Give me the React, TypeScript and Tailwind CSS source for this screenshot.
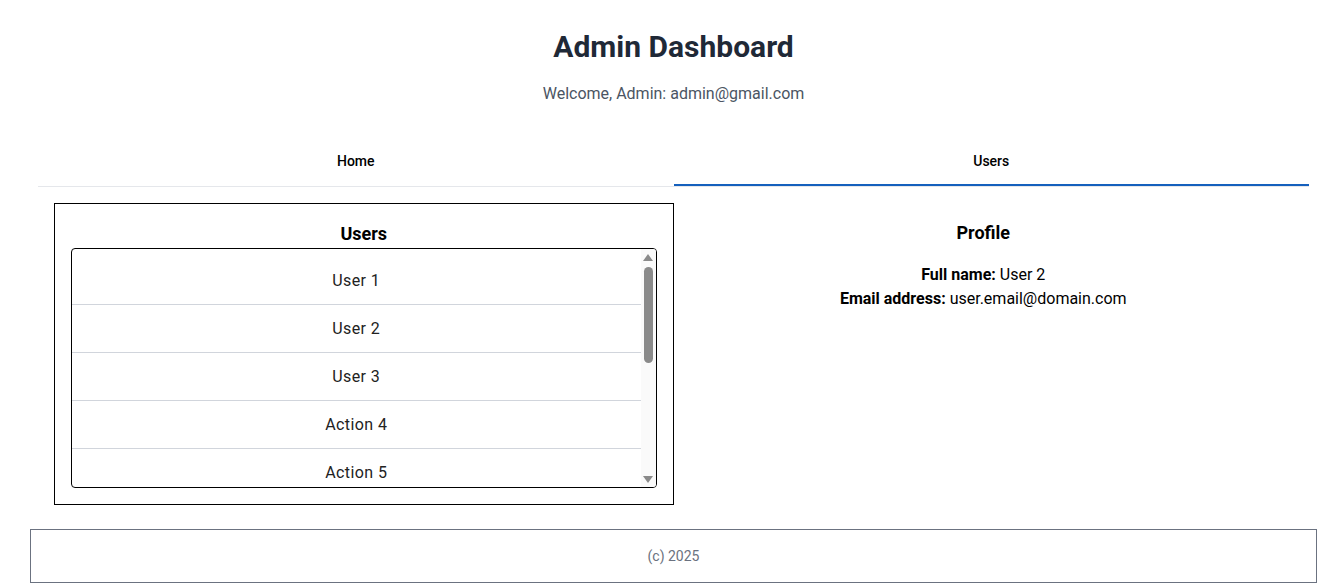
import { useState } from 'react'

const users = [
  { id: 1, name: 'User 1' },
  { id: 2, name: 'User 2' },
  { id: 3, name: 'User 3' },
  { id: 4, name: 'Action 4' },
  { id: 5, name: 'Action 5' },
  { id: 6, name: 'Action 6' },
  { id: 7, name: 'Action 7' },
  { id: 8, name: 'Action 8' },
  { id: 9, name: 'Action 9' },
  { id: 10, name: 'Action 10' },
]

function Tabs({ tab, setTab }: { tab: string; setTab: (t: string) => void }) {
  return (
    <div className="flex border-b border-gray-200">
      {['Home', 'Users'].map(t => (
        <button
          key={t}
          onClick={() => setTab(t)}
          className={`relative flex-1 h-12 pb-0.5 text-sm font-medium text-black ${tab === t ? 'after:absolute after:left-0 after:right-0 after:bottom-0 after:h-[2px] after:bg-[#1560bd]' : ''}`}
        >
          {t}
        </button>
      ))}
    </div>
  )
}

// list with a classic-looking scrollbar drawn beside it
function UserList({ onSelect }: { onSelect: (id: number) => void }) {
  const [ratio, setRatio] = useState(0)
  const thumbTop = 2 + ratio * (206 - 2 - 96)

  return (
    <div className="flex h-[240px] overflow-hidden rounded-[4px] border border-black">
      <ul
        className="flex-1 overflow-y-auto py-2 [scrollbar-width:none]"
        onScroll={e => {
          const el = e.currentTarget
          setRatio(el.scrollTop / (el.scrollHeight - el.clientHeight))
        }}
      >
        {users.map(u => (
          <li
            key={u.id}
            onClick={() => onSelect(u.id)}
            className="flex h-12 cursor-pointer items-center justify-center border-b border-gray-300 text-base tracking-[0.4px] text-[#222]"
          >
            {u.name}
          </li>
        ))}
      </ul>
      <div className="flex w-[15px] flex-col bg-[#fafafa]">
        <div className="flex h-4 items-center justify-center">
          <svg width="10" height="7" viewBox="0 0 10 7"><path d="M5 0L10 7H0z" fill="#8a8a8a" /></svg>
        </div>
        <div className="relative flex-1">
          <div className="absolute left-[3px] w-[9px] h-[96px] rounded-[5px] bg-[#8a8a8a]" style={{ top: thumbTop }} />
        </div>
        <div className="flex h-4 items-center justify-center">
          <svg width="10" height="7" viewBox="0 0 10 7"><path d="M0 0H10L5 7z" fill="#8a8a8a" /></svg>
        </div>
      </div>
    </div>
  )
}

export default function App() {
  const [tab, setTab] = useState('Users')
  const [selected, setSelected] = useState(2)
  const user = users.find(u => u.id === selected)

  return (
    <div className="min-h-screen bg-white pl-[13px] font-['Roboto',sans-serif]">
      <header className="pt-[29px] text-center">
        <h1 className="text-3xl font-bold text-[#1f2937]">Admin Dashboard</h1>
        <p className="mt-[17px] text-base text-[#4b5563]">Welcome, Admin: admin@gmail.com</p>
      </header>

      <div className="mx-[25px] mt-[32px]">
        <Tabs tab={tab} setTab={setTab} />
        <div className="grid grid-cols-2 px-4 pt-4">
          <div className="border border-black p-4">
            <h2 className="text-center text-lg font-bold text-black">Users</h2>
            <UserList onSelect={setSelected} />
          </div>
          <div className="pt-[16px] text-center text-black">
            <h2 className="text-lg font-bold">Profile</h2>
            <div className="mt-4 text-base">
              <p><span className="font-bold">Full name:</span> {user?.name}</p>
              <p><span className="font-bold">Email address:</span> user.email@domain.com</p>
            </div>
          </div>
        </div>
      </div>

      <footer className="mx-[17px] mt-6 border border-[#6b7280] py-4 text-center text-sm text-[#6b7280]">
        (c) 2025
      </footer>
    </div>
  )
}
